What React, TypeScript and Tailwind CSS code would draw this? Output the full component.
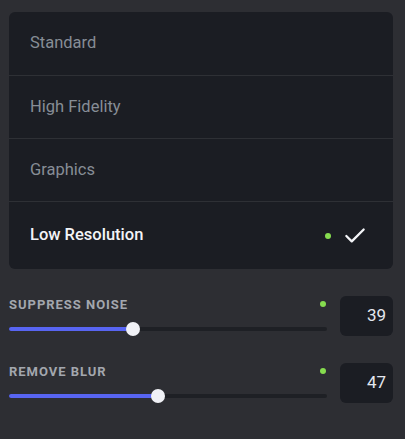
import React from "react";
import { Check } from "lucide-react";

const modes = ["Standard", "High Fidelity", "Graphics", "Low Resolution"];

function Slider({ label, value }: { label: string; value: number }) {
  return (
    <div className="flex items-start gap-[13px]">
      <div className="flex-1 flex flex-col">
        <div className="flex items-center justify-between h-[16px]">
          <span className="text-[13px] font-bold uppercase tracking-[0.075em] text-[#a3a7ae] leading-none">
            {label}
          </span>
          <span className="w-[6px] h-[6px] rounded-full bg-[#86dc4f] mr-[1px]" />
        </div>
        <div className="relative h-[14px] mt-[10px] flex items-center">
          <div className="w-full h-[4px] rounded-full bg-[#1e2025]" />
          <div
            className="absolute left-0 h-[4px] rounded-full bg-[#5865f2]"
            style={{ width: `${value}%` }}
          />
          <div
            className="absolute w-[14px] h-[14px] -ml-[7px] rounded-full bg-[#f0f1f6]"
            style={{ left: `${value}%` }}
          />
        </div>
      </div>
      <div className="w-[53px] h-[40px] rounded-md bg-[#1b1d23] flex items-center justify-end pr-[7px] text-[17px] text-[#e4e7ef]">
        {value}
      </div>
    </div>
  );
}

export default function App() {
  return (
    <div
      className="w-[405px] h-[439px] bg-[#2d2e33] pl-[9px] pr-[12px] pt-[12px] flex flex-col gap-[27px]"
      style={{ fontFamily: "Roboto, 'Liberation Sans', sans-serif" }}
    >
      {/* Quality mode list */}
      <div className="rounded-md bg-[#1b1d23] overflow-hidden">
        {modes.map((m, i) => {
          const selected = i === modes.length - 1;
          return (
            <div
              key={m}
              className={`flex items-center px-[21px] ${
                selected ? "h-[67px]" : i === 0 ? "h-[64px] border-b border-[#2e3035]" : "h-[63px] border-b border-[#2e3035]"
              }`}
            >
              <span
                className={`flex-1 text-[16.5px] ${
                  selected ? "text-[#f3f4f7] font-medium" : "text-[#878d96]"
                }`}
              >
                {m}
              </span>
              {selected && (
                <div className="flex items-center gap-[11px] mr-[4px]">
                  <span className="w-[6px] h-[6px] rounded-full bg-[#86dc4f]" />
                  <Check size={26} strokeWidth={2.1} className="text-[#f3f4f7]" />
                </div>
              )}
            </div>
          );
        })}
      </div>

      {/* Sliders */}
      <div className="flex flex-col gap-[27px]">
        <Slider label="Suppress Noise" value={39} />
        <Slider label="Remove Blur" value={47} />
      </div>
    </div>
  );
}
